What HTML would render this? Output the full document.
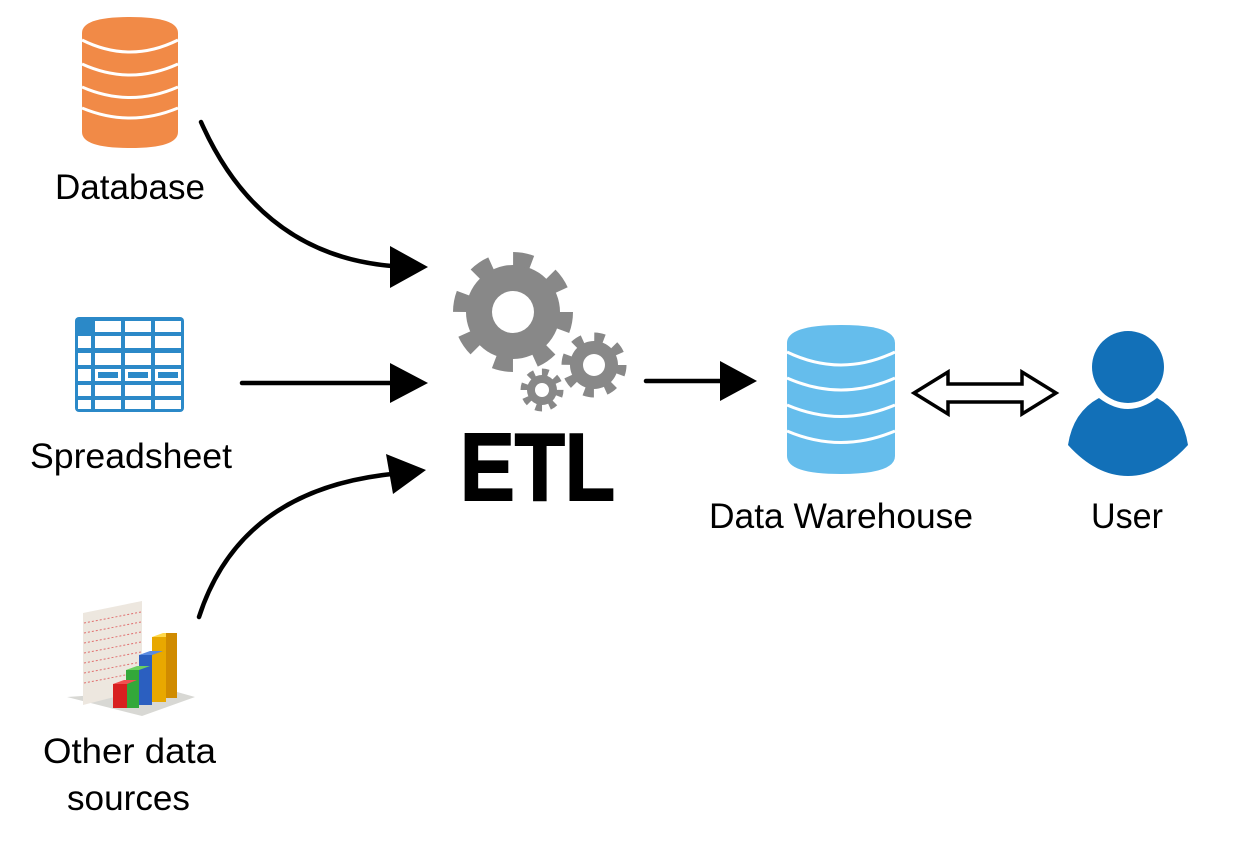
<!DOCTYPE html>
<html><head><meta charset="utf-8"><style>html,body{margin:0;padding:0;background:#fff;}svg{display:block}</style></head>
<body>
<svg width="1237" height="851" viewBox="0 0 1237 851" xmlns="http://www.w3.org/2000/svg" font-family="Liberation Sans, sans-serif">
<!-- Orange database -->
<g>
<path d="M82 33 Q82 17 130 17 Q178 17 178 33 L178 132 Q178 148 130 148 Q82 148 82 132 Z" fill="#f18a47"/>
<path d="M82 40 Q130 64 178 40" stroke="#fff" stroke-width="3" fill="none"/>
<path d="M82 64 Q130 86 178 64" stroke="#fff" stroke-width="3" fill="none"/>
<path d="M82 87 Q130 108 178 87" stroke="#fff" stroke-width="3" fill="none"/>
<path d="M82 108 Q130 128 178 108" stroke="#fff" stroke-width="3" fill="none"/>
</g>
<text x="55" y="199" font-size="35" textLength="150" lengthAdjust="spacingAndGlyphs">Database</text>

<!-- Spreadsheet -->
<g>
<rect x="75" y="317" width="109" height="95" rx="4" fill="#2b89c8"/>
<g fill="#fff">
<rect x="95" y="321" width="26" height="11"/><rect x="125" y="321" width="26" height="11"/><rect x="155" y="321" width="26" height="11"/>
<rect x="78" y="336" width="13" height="12"/><rect x="95" y="336" width="26" height="12"/><rect x="125" y="336" width="26" height="12"/><rect x="155" y="336" width="26" height="12"/>
<rect x="78" y="353" width="13" height="12"/><rect x="95" y="353" width="26" height="12"/><rect x="125" y="353" width="26" height="12"/><rect x="155" y="353" width="26" height="12"/>
<rect x="78" y="369" width="13" height="12"/><rect x="95" y="369" width="26" height="12"/><rect x="125" y="369" width="26" height="12"/><rect x="155" y="369" width="26" height="12"/>
<rect x="78" y="385" width="13" height="11"/><rect x="95" y="385" width="26" height="11"/><rect x="125" y="385" width="26" height="11"/><rect x="155" y="385" width="26" height="11"/>
<rect x="78" y="400" width="13" height="9"/><rect x="95" y="400" width="26" height="9"/><rect x="125" y="400" width="26" height="9"/><rect x="155" y="400" width="26" height="9"/>
</g>
<g fill="#2b89c8"><rect x="98" y="372" width="20" height="6"/><rect x="128" y="372" width="20" height="6"/><rect x="158" y="372" width="20" height="6"/></g>
</g>
<text x="30" y="468" font-size="35" textLength="202" lengthAdjust="spacingAndGlyphs">Spreadsheet</text>

<!-- Chart -->
<g>
<polygon points="67,697 170,690 195,697 142,716" fill="#d8d8d4"/>
<polygon points="83,613 142,601 142,690 83,705" fill="#ede7df"/>
<g stroke="#e07070" stroke-width="1" stroke-dasharray="2,2">
<line x1="84" y1="623" x2="141" y2="612"/><line x1="84" y1="633" x2="141" y2="622"/><line x1="84" y1="643" x2="141" y2="632"/><line x1="84" y1="653" x2="141" y2="642"/><line x1="84" y1="663" x2="141" y2="652"/><line x1="84" y1="673" x2="141" y2="662"/><line x1="84" y1="683" x2="141" y2="672"/>
</g>
<rect x="152" y="637" width="14" height="65" fill="#e8a800"/><polygon points="152,637 166,637 177,633 163,633" fill="#ffd84a"/><rect x="166" y="633" width="11" height="65" fill="#d08b00"/>
<rect x="139" y="655" width="13" height="50" fill="#2b5fc0"/><polygon points="139,655 152,655 163,651 150,651" fill="#5a8ae0"/>
<rect x="126" y="670" width="13" height="38" fill="#33a83a"/><polygon points="126,670 139,670 150,666 137,666" fill="#6ad060"/>
<rect x="113" y="684" width="14" height="24" fill="#d82020"/><polygon points="113,684 127,684 137,680 124,680" fill="#f05050"/>
</g>
<text x="43" y="763" font-size="35" textLength="173" lengthAdjust="spacingAndGlyphs">Other data</text>
<text x="67" y="810" font-size="35" textLength="123" lengthAdjust="spacingAndGlyphs">sources</text>

<!-- Arrows -->
<g stroke="#000" stroke-width="4.5" fill="none" stroke-linecap="round">
<path d="M201 122 Q260 255 392 266"/>
<path d="M242 383 L392 383"/>
<path d="M199 617 Q240 490 392 474"/>
<path d="M646 381 L722 381"/>
</g>
<g fill="#000">
<polygon points="390,246 428,267 390,288"/>
<polygon points="390,363 428,383 390,403"/>
<polygon points="386,454 426,470 393,494"/>
<polygon points="720,361 757,381 720,401"/>
</g>

<!-- Gears -->
<g fill="#888888">
<circle cx="513" cy="312" r="47"/>
<circle cx="513" cy="312" r="53" fill="none" stroke="#888" stroke-width="14" stroke-dasharray="19 22.6"/>
<circle cx="594" cy="365" r="24"/>
<circle cx="594" cy="365" r="28" fill="none" stroke="#888" stroke-width="9" stroke-dasharray="10 12"/>
<circle cx="542" cy="390" r="15"/>
<circle cx="542" cy="390" r="18" fill="none" stroke="#888" stroke-width="7" stroke-dasharray="6.5 7.6"/>
</g>
<g fill="#fff"><circle cx="513" cy="312" r="21"/><circle cx="594" cy="365" r="11"/><circle cx="542" cy="390" r="7"/></g>
<text x="460" y="500" font-size="96" font-weight="bold" textLength="155" lengthAdjust="spacingAndGlyphs" stroke="#000" stroke-width="2">ETL</text>

<!-- DW database -->
<g>
<path d="M787 343 Q787 325 841 325 Q895 325 895 343 L895 456 Q895 474 841 474 Q787 474 787 456 Z" fill="#65bdec"/>
<path d="M787 352 Q841 378 895 352" stroke="#fff" stroke-width="3" fill="none"/>
<path d="M787 378 Q841 402 895 378" stroke="#fff" stroke-width="3" fill="none"/>
<path d="M787 405 Q841 428 895 405" stroke="#fff" stroke-width="3" fill="none"/>
<path d="M787 431 Q841 454 895 431" stroke="#fff" stroke-width="3" fill="none"/>
</g>
<text x="709" y="528" font-size="35" textLength="264" lengthAdjust="spacingAndGlyphs">Data Warehouse</text>

<!-- Double arrow -->
<polygon points="914,393 948,372 948,384 1022,384 1022,372 1056,393 1022,414 1022,402 948,402 948,414" fill="#fff" stroke="#000" stroke-width="3.5" stroke-linejoin="miter"/>

<!-- User -->
<g fill="#1270b8">
<circle cx="1128" cy="367" r="36"/>
<path d="M1099 398 Q1128 420 1157 398 Q1183 412 1188 445 Q1160 476 1128 476 Q1096 476 1068 445 Q1073 412 1099 398 Z"/>
</g>
<text x="1091" y="528" font-size="35" textLength="72" lengthAdjust="spacingAndGlyphs">User</text>
</svg>
</body></html>
